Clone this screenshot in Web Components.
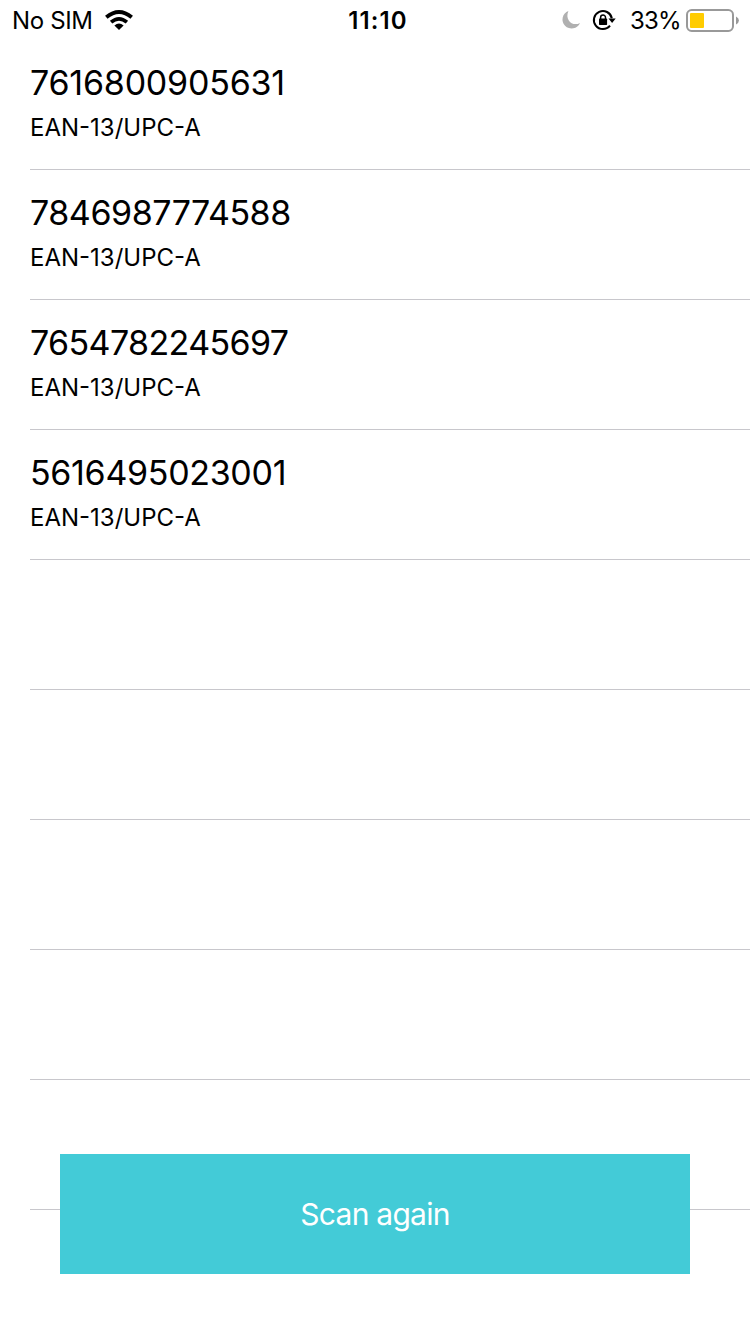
<!DOCTYPE html>
<html lang="en"><head><meta charset="utf-8"><title>Scanned codes</title>
<style>html,body{margin:0;background:#fff}body{font-family:Inter,"Liberation Sans",sans-serif;color:#000}</style></head>
<body><scan-screen></scan-screen>
<script>
const define=(name,html)=>customElements.define(name,class extends HTMLElement{
  constructor(){super();const t=document.createElement('template');t.innerHTML=html;this.attachShadow({mode:'open'}).append(t.content.cloneNode(true));}
});
define('status-bar',`<style>
:host{display:grid;grid-template-columns:1fr auto 1fr;height:40px;padding:0 11px 0 12px;box-sizing:border-box;font-size:24px;line-height:42px;white-space:nowrap}
div{display:flex}svg{display:block;flex:none}
.sim{width:93px;letter-spacing:-.35px}.time{font-weight:600;letter-spacing:1.1px;padding-left:5px}
.right{justify-content:flex-end}.pct{letter-spacing:-.8px;margin-left:15px;width:56px}
</style>
<div><span class="sim">No SIM</span><svg width="28" height="40" viewBox="105 0 28 40"><g fill="none" stroke="#000"><path stroke-width="3.9" d="M106.3 17.3Q119 6.8 131.7 17.3"/><path stroke-width="3.7" d="M111.1 22.2Q119 15.5 126.9 22.2"/></g><path d="M114.4 25.5Q119 21.6 123.6 25.5L119 29.9Z"/></svg></div>
<div class="time">11:10</div>
<div class="right"><svg width="54" height="40" viewBox="561 0 54 40" overflow="visible"><path fill="#b0b0b0" d="M568.4 10.9A9.1 9.1 0 1 0 580 22.9C572.8 27 564.4 20 568.4 10.9Z"/><path d="M611.8 18.3A9.05 9.05 0 1 0 610 25.7" fill="none" stroke="#000" stroke-width="2"/><path d="M608.5 18.5H615.7L612.1 22.9Z"/><rect x="599" y="18.5" width="8.1" height="6.5" rx=".7"/><path d="M600.6 19V17.4a2.45 2.45 0 0 1 4.9 0V19" fill="none" stroke="#000" stroke-width="1.5"/></svg><span class="pct">33%</span><svg width="53" height="40" viewBox="686 0 53 40"><rect x="687" y="10" width="46" height="21" rx="4.7" fill="#fff" stroke="#999" stroke-width="2"/><rect x="690" y="13" width="14" height="15" rx="1" fill="#fc0"/><path d="M736 16.5Q738.9 18 738.9 20.5T736 24.5Z" fill="#999"/></svg></div>`);
define('code-row',`<style>
:host{display:block;height:130px;margin-left:30px;padding-top:20px;box-sizing:border-box;border-bottom:1px solid #c8c7cc}
.code{font-size:34px;line-height:46px;letter-spacing:var(--tracking,0)}.type{font-size:24px;line-height:32px;margin-top:6px}
</style><div class="code"><slot></slot></div><div class="type"><slot name="type"></slot></div>`);
define('scan-button',`<style>
:host{display:block}button{display:block;width:100%;height:120px;border:0;padding:0;background:#43cbd7;color:#fff;font:400 30px/120px Inter,"Liberation Sans",sans-serif;letter-spacing:-.75px}
</style><button><slot></slot></button>`);
const codes=[['7616800905631',-.22],['7846987774588',-.46],['7654782245697',-.62],['5616495023001',-.32]];
define('scan-screen',`<style>
:host{display:block;position:relative;width:750px;height:1334px;overflow:hidden;background:#fff}
scan-button{position:absolute;left:60px;right:60px;bottom:60px}
</style><status-bar></status-bar><main>${codes.map(([c,t])=>`<code-row style="--tracking:${t}px">${c}<span slot="type">EAN-13/UPC-A</span></code-row>`).join('')}${'<code-row></code-row>'.repeat(5)}</main><scan-button>Scan again</scan-button>`);
</script></body></html>
